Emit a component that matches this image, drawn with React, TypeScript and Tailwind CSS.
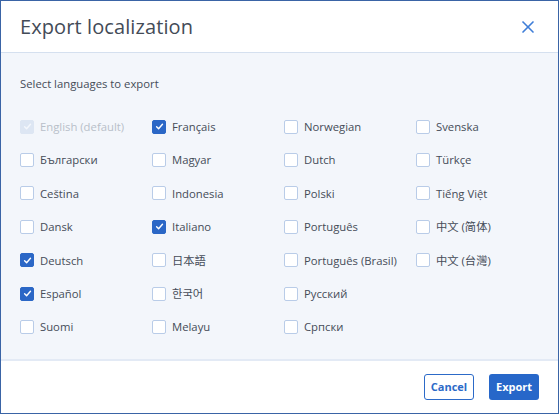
import { X } from "lucide-react";

type Lang = { label: string; checked?: boolean; disabled?: boolean };

const columns: Lang[][] = [
  [
    { label: "English (default)", checked: true, disabled: true },
    { label: "Български" },
    { label: "Ceština" },
    { label: "Dansk" },
    { label: "Deutsch", checked: true },
    { label: "Español", checked: true },
    { label: "Suomi" },
  ],
  [
    { label: "Français", checked: true },
    { label: "Magyar" },
    { label: "Indonesia" },
    { label: "Italiano", checked: true },
    { label: "日本語" },
    { label: "한국어" },
    { label: "Melayu" },
  ],
  [
    { label: "Norwegian" },
    { label: "Dutch" },
    { label: "Polski" },
    { label: "Português" },
    { label: "Português (Brasil)" },
    { label: "Русский" },
    { label: "Српски" },
  ],
  [
    { label: "Svenska" },
    { label: "Türkçe" },
    { label: "Tiếng Việt" },
    { label: "中文 (简体)" },
    { label: "中文 (台灣)" },
  ],
];

const CheckIcon = ({ color }: { color: string }) => (
  <svg width="9" height="9" viewBox="0 0 10 10" fill="none">
    <path d="M1.8 5.3 L4 7.4 L8.3 2.6" stroke={color} strokeWidth="1.6" strokeLinecap="round" strokeLinejoin="round" />
  </svg>
);

const LangCheckbox = ({ label, checked, disabled }: Lang) => {
  let box = "bg-white border border-[#b9cce8]";
  if (checked && disabled) box = "bg-[#dde6f3] border border-[#dde6f3]";
  else if (checked) box = "bg-[#2b67c6] border border-[#2b67c6]";
  return (
    <label className="flex items-center gap-[6px] h-full">
      <span className={`flex items-center justify-center w-[14px] h-[14px] rounded-[2px] ${box}`}>
        {checked && <CheckIcon color={disabled ? "#f4f7fc" : "#ffffff"} />}
      </span>
      <span className={`text-[11.3px] leading-none whitespace-nowrap ${disabled ? "text-[#b8bfc9]" : "text-[#454c58]"}`}>
        {label}
      </span>
    </label>
  );
};

const App = () => {
  return (
    <div
      className="w-[559px] h-[414px] border border-[#3a64a6] bg-white flex flex-col"
      style={{ fontFamily: '"Open Sans", "Noto Sans CJK SC", sans-serif' }}
    >
      <div className="h-[52px] flex items-center justify-between pl-[19px] pr-[20px] border-b border-[#d5e0ef]">
        <h2 className="text-[20px] text-[#434b57] tracking-[0.1px]">Export localization</h2>
        <X size={20} strokeWidth={2} className="text-[#3f7ed8]" />
      </div>
      <div className="flex-1 bg-[#f3f6fb] px-[19px] pt-[23px] border-b-2 border-[#e3eaf5]">
        <p className="text-[11.3px] leading-4 text-[#454c58]">Select languages to export</p>
        <div className="grid grid-cols-[132px_132px_132px_132px] mt-[18px]">
          {columns.map((col, ci) => (
            <div key={ci} className="grid auto-rows-[33.4px]">
              {col.map((lang) => (
                <LangCheckbox key={lang.label} {...lang} />
              ))}
            </div>
          ))}
        </div>
      </div>
      <div className="h-[52px] flex items-center justify-end gap-[15px] pr-[19px]">
        <button className="w-[50px] h-[26px] rounded-[3px] border border-[#2c6ac8] bg-white text-[#2c6ac8] text-[11px] font-bold">
          Cancel
        </button>
        <button className="w-[50px] h-[26px] rounded-[3px] bg-[#2767c9] text-white text-[11px] font-bold">
          Export
        </button>
      </div>
    </div>
  );
};

export default App;
